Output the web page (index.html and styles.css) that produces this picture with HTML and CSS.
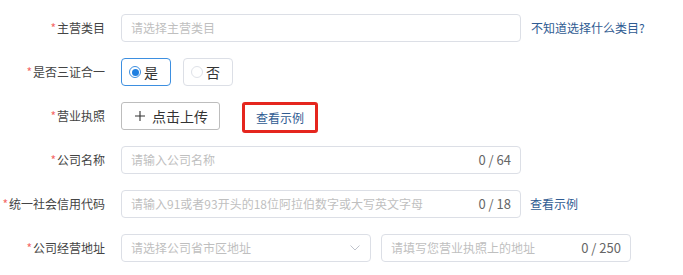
FILE: index.html
```html
<!DOCTYPE html>
<html lang="zh-CN">
<head>
<meta charset="utf-8">
<title>表单</title>
<link rel="stylesheet" href="styles.css">
</head>
<body>
<form class="form">
  <div class="row">
    <label class="label"><span class="req">*</span>主营类目</label>
    <div class="field w400"><input type="text" placeholder="请选择主营类目"></div>
    <a class="link ml10" href="#">不知道选择什么类目?</a>
  </div>
  <div class="row">
    <label class="label"><span class="req">*</span>是否三证合一</label>
    <div class="radios">
      <span class="radio checked"><span class="dot"></span><span class="rtext">是</span></span>
      <span class="radio"><span class="dot"></span><span class="rtext">否</span></span>
    </div>
  </div>
  <div class="row">
    <label class="label"><span class="req">*</span>营业执照</label>
    <button type="button" class="upload">
      <svg class="plus" width="10" height="10" viewBox="0 0 10 10"><path d="M5 0V10M0 5H10" stroke="#333" stroke-width="1.1" fill="none"/></svg>
      <span>点击上传</span>
    </button>
    <a class="example" href="#">查看示例</a>
  </div>
  <div class="row">
    <label class="label"><span class="req">*</span>公司名称</label>
    <div class="field w400"><input type="text" placeholder="请输入公司名称"><span class="count">0 / 64</span></div>
  </div>
  <div class="row">
    <label class="label"><span class="req">*</span>统一社会信用代码</label>
    <div class="field w400"><input type="text" placeholder="请输入91或者93开头的18位阿拉伯数字或大写英文字母"><span class="count">0 / 18</span></div>
    <a class="link ml9" href="#">查看示例</a>
  </div>
  <div class="row">
    <label class="label"><span class="req">*</span>公司经营地址</label>
    <div class="field w250 select"><input type="text" placeholder="请选择公司省市区地址" readonly>
      <svg class="chev" width="10" height="6" viewBox="0 0 10 6"><path d="M0.5 0.5L5 5L9.5 0.5" stroke="#c0c4cc" stroke-width="1" fill="none"/></svg>
    </div>
    <div class="field w250 ml10"><input type="text" placeholder="请填写您营业执照上的地址"><span class="count">0 / 250</span></div>
  </div>
</form>
</body>
</html>
```

FILE: styles.css
```css
body {
  margin: 0;
  background: #fff;
  color: #333;
  font-family: "Noto Sans CJK SC", "Noto Sans", sans-serif;
}

.form {
  display: flex;
  flex-direction: column;
  gap: 16px;
  padding-top: 14px;
}

.row {
  display: flex;
  align-items: center;
  height: 28px;
}

.label {
  width: 105px;
  margin-right: 16px;
  text-align: right;
  font-size: 12px;
  line-height: 16px;
  color: #444;
  white-space: nowrap;
}

.req {
  color: #f46a6a;
  margin-right: 1px;
}

.field {
  box-sizing: border-box;
  height: 28px;
  border: 1px solid #dcdfe6;
  border-radius: 4px;
  display: flex;
  align-items: center;
  padding: 0 9px;
  background: #fff;
}

.w400 { width: 400px; }
.w250 { width: 250px; }
.ml10 { margin-left: 10px; }
.ml9 { margin-left: 9px; }

.field input {
  flex: 1;
  min-width: 0;
  border: 0;
  outline: 0;
  padding: 0;
  background: transparent;
  font-family: inherit;
  font-size: 12px;
  line-height: 16px;
  color: #333;
}

.field input::placeholder {
  color: #bfbfbf;
}

.count {
  font-size: 13px;
  color: #666;
  line-height: 16px;
  white-space: nowrap;
}

.select .chev {
  margin-right: 1px;
}

.link {
  color: #2f5b92;
  font-size: 12px;
  line-height: 16px;
  text-decoration: none;
  white-space: nowrap;
}

.radios {
  display: flex;
  gap: 12px;
}

.radio {
  box-sizing: border-box;
  height: 28px;
  display: flex;
  align-items: center;
  gap: 3px;
  padding: 0 12px 0 7px;
  border: 1px solid #dcdfe6;
  border-radius: 4px;
  background: #fff;
}

.radio .dot {
  box-sizing: border-box;
  width: 12px;
  height: 12px;
  border-radius: 50%;
  border: 1px solid #dfe2e8;
  background: #fff;
  display: flex;
  align-items: center;
  justify-content: center;
}

.radio.checked {
  border-color: #3d8fe0;
}

.radio.checked .dot {
  border-color: #3d8fe0;
}

.radio.checked .dot::after {
  content: "";
  width: 7px;
  height: 7px;
  border-radius: 50%;
  background: #1f7fe0;
}

.rtext {
  font-size: 14px;
  line-height: 18px;
  color: #333;
}

.upload {
  box-sizing: border-box;
  width: 99px;
  height: 28px;
  display: flex;
  align-items: center;
  gap: 7px;
  padding: 0 0 0 13px;
  margin: 0;
  border: 1px solid #bdbdbd;
  border-radius: 3px;
  background: #fff;
  font-family: inherit;
  font-size: 14px;
  line-height: 18px;
  color: #333;
}

.example {
  box-sizing: border-box;
  align-self: flex-start;
  width: 76px;
  height: 31px;
  margin-left: 22px;
  border: 3px solid #e5261e;
  border-radius: 3px;
  display: flex;
  align-items: center;
  justify-content: center;
  color: #2f5b92;
  font-size: 12px;
  line-height: 16px;
  text-decoration: none;
}
```
